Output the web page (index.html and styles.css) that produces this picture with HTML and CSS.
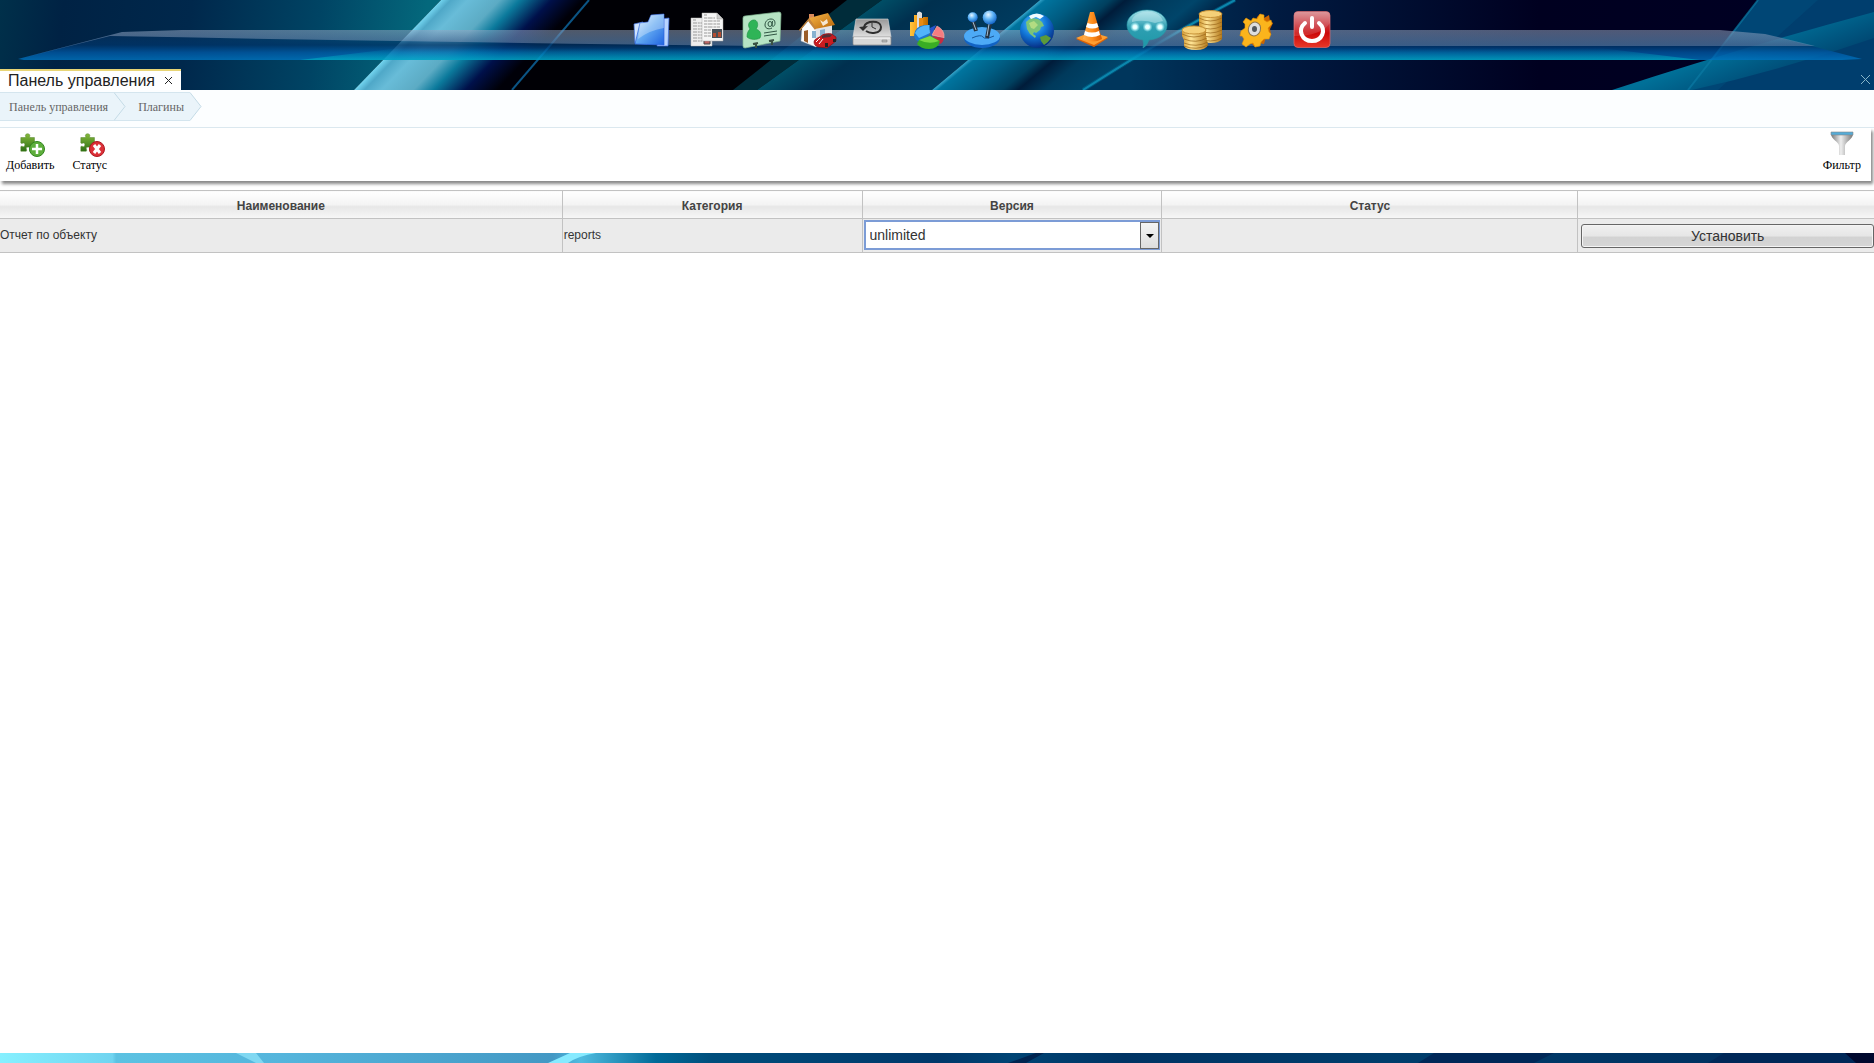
FILE: index.html
```html
<!DOCTYPE html>
<html lang="ru">
<head>
	<title>Панель управления</title>
	<meta charset="utf-8">
	<meta name="viewport" content="width=device-width, initial-scale=1">
	<link rel="stylesheet" href="styles.css">
</head>
<body>
	<header class="desktop">
		<svg class="wallpaper" viewBox="0 0 1874 90" preserveAspectRatio="none" aria-hidden="true">
			<defs>
				<linearGradient id="sky" gradientUnits="userSpaceOnUse" x1="0" y1="0" x2="420" y2="60"><stop offset="0" stop-color="#00304a"/><stop offset=".15" stop-color="#002244"/><stop offset=".45" stop-color="#00284c"/><stop offset=".75" stop-color="#004464"/><stop offset="1" stop-color="#04687c"/></linearGradient>
				<linearGradient id="beam" gradientUnits="userSpaceOnUse" x1="396" y1="45" x2="471" y2="117"><stop offset="0" stop-color="#78dcf6"/><stop offset=".08" stop-color="#4fa8c8"/><stop offset=".2" stop-color="#68bcd8"/><stop offset=".42" stop-color="#5cabc4"/><stop offset=".56" stop-color="#0b7a9c"/><stop offset=".78" stop-color="#00104a"/><stop offset="1" stop-color="#000008"/></linearGradient>
				<linearGradient id="teal" gradientUnits="userSpaceOnUse" x1="820" y1="45" x2="880" y2="128"><stop offset="0" stop-color="#004e66"/><stop offset=".3" stop-color="#00304f"/><stop offset="1" stop-color="#003c60"/></linearGradient>
				<linearGradient id="wave" gradientUnits="userSpaceOnUse" x1="986" y1="45" x2="1066" y2="141"><stop offset="0" stop-color="#38a6cc"/><stop offset=".03" stop-color="#00749e"/><stop offset=".2" stop-color="#005c82"/><stop offset=".36" stop-color="#00405f"/><stop offset=".44" stop-color="#001c3a"/><stop offset=".58" stop-color="#003a5c"/><stop offset=".8" stop-color="#00456a"/><stop offset="1" stop-color="#001e40"/></linearGradient>
				<linearGradient id="night" gradientUnits="userSpaceOnUse" x1="1130" y1="0" x2="1874" y2="0"><stop offset="0" stop-color="#00365c"/><stop offset=".2" stop-color="#001a40"/><stop offset=".55" stop-color="#000020"/><stop offset="1" stop-color="#000024"/></linearGradient>
				<linearGradient id="swoosh" gradientUnits="userSpaceOnUse" x1="1750" y1="40" x2="1770" y2="90"><stop offset="0" stop-color="#007098"/><stop offset=".5" stop-color="#005882"/><stop offset="1" stop-color="#00416c"/></linearGradient>
				<linearGradient id="shelf" x2="0" y2="1"><stop offset="0" stop-color="#0a3c70" stop-opacity=".2"/><stop offset=".5" stop-color="#003468" stop-opacity=".8"/><stop offset=".75" stop-color="#0058a4" stop-opacity=".8"/><stop offset="1" stop-color="#0074c0" stop-opacity=".8"/></linearGradient>
				<linearGradient id="gloss" x2="0" y2="1"><stop offset="0" stop-color="#bcc4d8" stop-opacity=".42"/><stop offset="1" stop-color="#8ca4c8" stop-opacity=".3"/></linearGradient>
				<linearGradient id="glow" x2="0" y2="1"><stop offset="0" stop-color="#00c0d8" stop-opacity="0"/><stop offset="1" stop-color="#00c8c8" stop-opacity=".5"/></linearGradient>
			</defs>
			<path fill="#000005" d="M0 0h1874v90H0z"/>
			<path fill="url(#sky)" d="M0 0h441l-87 90H0z"/>
			<path fill="url(#beam)" d="M441 0h149l-78 90H354z"/>
			<path d="M589 0l-77 90" stroke="#0b5484" stroke-width="2"/>
			<path fill="#002c3a" d="M847 0h35L757 90h-24z"/>
			<path fill="url(#teal)" d="M882 0h158L932 90H757z"/>
			<path fill="url(#wave)" d="M1040 0h195l-152 90H932z"/>
			<path fill="url(#night)" d="M1235 0h639v90H1083z"/>
			<path d="M1235 0Q1164 38 1083 90" fill="none" stroke="#00709a" stroke-width="4" opacity=".5"/>
			<path d="M1235 0Q1164 38 1083 90" fill="none" stroke="#0b86ac" stroke-width="2"/>
			<path fill="#003e6e" d="M1758 0h116v90h-186z"/>
			<path fill="#004e7c" d="M1758 0h60l-100 90h-30z" opacity=".5"/>
			<path fill="url(#swoosh)" d="M1874 12Q1740 48 1612 90h80q90-20 182-52z"/>
			<path d="M1758 0l-70 90" stroke="#0b7aa4" stroke-width="2" opacity=".7"/>
			<path fill="url(#shelf)" d="M18 59l104-27 60-2h1538l45 4 97 25-20 1H24z"/>
			<path fill="url(#glow)" d="M400 48h1200l100 12H300z"/>
			<path fill="url(#gloss)" d="M122 32l60-2h1538l45 4 50 12H760q-340-4-650-10L18 59z"/>
		</svg>

		<svg class="defs" aria-hidden="true">
			<defs>
				<linearGradient id="blue" x1="0" y1="0" x2="1" y2="1"><stop offset="0" stop-color="#dff0ff"/><stop offset=".5" stop-color="#61a8f2"/><stop offset="1" stop-color="#1f63e0"/></linearGradient>
				<radialGradient id="ball" cx=".4" cy=".3" r=".7"><stop offset="0" stop-color="#e6f6ff"/><stop offset=".5" stop-color="#5cb2f5"/><stop offset="1" stop-color="#1565c8"/></radialGradient>
				<linearGradient id="roof" x1="0" y1="0" x2="1" y2="1"><stop offset="0" stop-color="#f8b84c"/><stop offset="1" stop-color="#b86405"/></linearGradient>
				<linearGradient id="steel" x2="0" y2="1"><stop offset="0" stop-color="#989898"/><stop offset="1" stop-color="#e0e0e0"/></linearGradient>
				<linearGradient id="bar"><stop offset="0" stop-color="#ffc640"/><stop offset=".5" stop-color="#f59a10"/><stop offset="1" stop-color="#b96800"/></linearGradient>
				<radialGradient id="sea" cx=".4" cy=".3" r=".75"><stop offset="0" stop-color="#56c8ff"/><stop offset=".5" stop-color="#1277d8"/><stop offset="1" stop-color="#05277c"/></radialGradient>
				<linearGradient id="orange"><stop offset="0" stop-color="#ffb050"/><stop offset=".5" stop-color="#ff8d1c"/><stop offset="1" stop-color="#d85c00"/></linearGradient>
				<linearGradient id="bubble" x2="0" y2="1"><stop offset="0" stop-color="#a8e2ea"/><stop offset=".45" stop-color="#2f9fb2"/><stop offset="1" stop-color="#1d98a8"/></linearGradient>
				<radialGradient id="dot"><stop offset="0" stop-color="#fff"/><stop offset=".4" stop-color="#dcffff"/><stop offset="1" stop-color="#a0f0f8" stop-opacity="0"/></radialGradient>
				<linearGradient id="gold"><stop offset="0" stop-color="#d29a34"/><stop offset=".35" stop-color="#ffe596"/><stop offset="1" stop-color="#b57a1c"/></linearGradient>
				<linearGradient id="red" x2="0" y2="1"><stop offset="0" stop-color="#d8888c"/><stop offset=".4" stop-color="#c93038"/><stop offset=".6" stop-color="#cc0808"/><stop offset="1" stop-color="#e83828"/></linearGradient>
				<linearGradient id="leaf" x2="0" y2="1"><stop offset="0" stop-color="#86ba3c"/><stop offset="1" stop-color="#2d6f14"/></linearGradient>
				<linearGradient id="metal"><stop offset="0" stop-color="#777"/><stop offset=".45" stop-color="#eee"/><stop offset="1" stop-color="#777"/></linearGradient>
				<symbol id="puzzle" viewBox="0 0 22 22"><path fill="url(#leaf)" stroke="#47791f" stroke-width=".5" d="M2 5h5c1-1 0-1 0-2 0-3 5-3 5 0 0 1-1 1 0 2h5v5c1 1 2 0 3 0 2 0 2 5 0 5-1 0-2-1-3 0v5h-5c-1-1 0-2 0-3 0-2-4-2-4 0 0 1 1 2 0 3H2v-5c1-1 2 0 3 0 2 0 2-4 0-4-1 0-2 1-3 0z"/></symbol>
			</defs>
		</svg>

		<nav class="dock" aria-label="Меню">
			<button type="button" class="dock-item" aria-label="Файлы">
				<svg viewBox="0 0 40 40"><path fill="#b9d4ff" stroke="#3f6ee0" stroke-width=".7" d="M28 9l9-1-1 28H25z"/><path fill="#cfe4ff" stroke="#497be8" stroke-width=".7" d="M2 14l9-2 4 22-12-1z"/><path fill="url(#blue)" stroke="#2c62dc" stroke-width=".7" d="M8 13l8-1 3-7 13-1v31L3 34z"/><path fill="#fff" opacity=".3" d="M8 13l8-1 3-7 13-1v14Q18 20 6 29z"/></svg>
			</button>
			<button type="button" class="dock-item" aria-label="Документы">
				<svg viewBox="0 0 40 40"><path fill="#eee" stroke="#bbb" stroke-width=".5" d="M4 8h21v28H4z"/><path stroke="#999" stroke-dasharray="4 .8 2 .6" d="M6 10h3M6 13h13M6 16h13M6 19h13M6 22h9M6 25h9M6 28h9M6 31h9"/><path fill="#b66" stroke="#444" d="M17 30h6v4h-6z"/><path fill="#f6f6f6" stroke="#aaa" stroke-width=".5" d="M15 3h15l6 6v22H15z"/><path fill="#ccc" stroke="#999" stroke-width=".5" d="M30 3v6h6z"/><path stroke="#999" stroke-dasharray="3 .6 5 .8" d="M17 5h3M17 8h11M17 11h16M17 14h16M17 17h16M17 20h7M17 23h7M17 26h7"/><path fill="#485058" d="M25 19h10v9H25z"/><path fill="#b44d32" d="M26 23h3v4h-3zM31 22h3v5h-3z"/></svg>
			</button>
			<button type="button" class="dock-item" aria-label="Контакты">
				<svg viewBox="0 0 40 40"><path fill="#b6e3c4" stroke="#82b894" stroke-width=".7" d="M1 8q0-2 2-2l34-4q2 0 2 2l-1 27-35 7q-2 0-2-2z"/><path fill="#2fb457" stroke="#1c9142" stroke-width=".6" d="M11 10c5-1 6 6 3 9 6 2 5 7 4 9-3 2-10 2-13-1 0-4 1-6 3-8-3-4-1-8 3-9z"/><g fill="none" stroke="#315644" stroke-width="1"><ellipse cx="28" cy="14" rx="2" ry="2.500"/><path d="M30.500 11l-.5 5c2 1 3-1 3-3 0-3-2-4-4-4-4 0-6 3-6 6s3 5 7 3M22 23l13-2M22 26l13-2"/></g><path fill="none" stroke="#3a5143" stroke-width="2" d="M11 34l5-1M14 34v4M27 31l5-1M30 31v4"/></svg>
			</button>
			<button type="button" class="dock-item" aria-label="Объекты">
				<svg viewBox="0 0 40 40"><path fill="#d98a5c" d="M12 4h5v8h-5z"/><path fill="#fbfbfb" stroke="#bbb" stroke-width=".4" d="M5 18l7-8 7 9v18L4 31z"/><path fill="#e2e4e8" d="M19 18l16-5v17l-16 7z"/><path fill="url(#roof)" d="M12 8l19-5 7 12-20 4z"/><path fill="#c4843c" d="M2 20L12 8l7 10-1 2-7-9-8 10z"/><path fill="#9a5d29" d="M7 21l4-1v13l-4-2z"/><path fill="#88b2d0" d="M15 21h4v7h-4zM23 20l5-1v6l-5 1z"/><path fill="#fff" opacity=".8" d="M23 10l3 2 4-3 1 4-5 3z"/><path fill="#c81c20" stroke="#7c0810" stroke-width=".6" d="M17 32c0-3 4-4 7-6 3-3 11-3 12-1l3 2v4l-5 4-4 3-9-1c-3-1-4-3-4-5z"/><path fill="#503038" d="M25 26c3-2 8-2 10-1l-2 2-8 1z"/><path stroke="#fff" d="M23 28l-4 4M26 29l-4 5"/><path fill="#222" d="M28 33h3v4h-3zM36 29h3v3h-3z"/></svg>
			</button>
			<button type="button" class="dock-item" aria-label="История">
				<svg viewBox="0 0 40 40"><path fill="url(#steel)" stroke="#ddd" stroke-width=".6" d="M4 9h32l3 18H1z"/><path fill="#d7d7d7" stroke="#888" stroke-width=".7" d="M1 27h38v7q0 1-1 1H2q-1 0-1-1z"/><path stroke="#fff" d="M2 28h36"/><path fill="none" stroke="#2f2f2f" stroke-width="2" d="M12 17c2-7 17-7 17 0 0 7-11 7-15 4"/><path fill="#2f2f2f" d="M7 17l9-1-5 5z"/><path fill="none" stroke="#333" d="M20 13v4l4 2"/><path fill="#bbb" stroke="#777" stroke-width=".5" d="M30 30h5v2h-5z"/></svg>
			</button>
			<button type="button" class="dock-item" aria-label="Отчеты">
				<svg viewBox="0 0 40 40"><path fill="url(#bar)" d="M3 12h5v14H3zM7 5h5v20H7zM16 7h5v18h-5z"/><path fill="#ddd" d="M10 3q2-3 5 0v20h-5z"/><path fill="#e88b12" d="M12 8h4v16h-4z"/><path fill="#1d78d0" d="M7 25q1-9 11-10h5l-1 10-9 7q-6-2-6-7z"/><path fill="#52b4fa" d="M8 23q4-8 14-8l1 8-11 5z"/><path fill="#2554cc" d="M23 18l6-3-5 12z"/><path fill="#f67c80" stroke="#fba" stroke-width=".6" d="M25 25l5-9q8 4 7 12z"/><path fill="#c72c40" d="M25 26l12 2q-1 5-4 6z"/><path fill="#3aad24" d="M12 30l11-4 10 5q-2 8-11 8-8 0-12-5z"/><path fill="#7bda44" d="M12 30l11-4 9 5q-10 4-20-1z"/></svg>
			</button>
			<button type="button" class="dock-item" aria-label="Управление">
				<svg viewBox="0 0 40 40"><ellipse cx="20" cy="28" rx="18" ry="10" fill="#1263c4"/><ellipse cx="20" cy="26" rx="18" ry="9" fill="#4daaf6"/><path fill="none" stroke="#1a5899" d="M10 28q9-4 11-1t11-1"/><path stroke="#243443" stroke-width="4" d="M11 11l3 10M28 13l-3 15"/><path stroke="#a7c0d4" d="M11 12l3 8M27 14l-2 12"/><circle cx="10.7" cy="7.3" r="5" fill="url(#ball)"/><circle cx="27.7" cy="7.5" r="7" fill="url(#ball)"/></svg>
			</button>
			<button type="button" class="dock-item" aria-label="Карта">
				<svg viewBox="0 0 40 40"><circle cx="20" cy="20.7" r="17" fill="url(#sea)"/><path fill="#7cc478" d="M9 12l5-4 7 1 4 3 2 4-3 1-1 3-4 3-2-1-1 2 3 2-1 2-5-4-3-5z"/><path fill="#d8ec88" d="M12 13l5-2 4 4-4 4-3-1z" opacity=".6"/><path fill="#f0fbff" d="M12 6q8-5 15 0l-4 3-4-2-5 2z"/><path fill="#5c9a3a" d="M23 27l6-2 5 3q-3 5-7 7l-3-4z"/></svg>
			</button>
			<button type="button" class="dock-item" aria-label="Монтаж">
				<svg viewBox="0 0 40 40"><path fill="#dc6206" d="M4 29l15-5 17 4-14 9z"/><path fill="#ff9e30" d="M4 28l15-6 17 5-14 8z"/><path fill="url(#orange)" d="M18 2h4l8 27q-9 5-19 0z"/><path fill="#fff" d="M15.500 13q5 2 9.500 0l1.500 4q-6 3-12.500 0zM13 21q7 3 14 0l1 4q-8 4-16 0z"/></svg>
			</button>
			<button type="button" class="dock-item" aria-label="Сообщения">
				<svg viewBox="0 0 40 40"><path fill="url(#bubble)" stroke="#2895a5" stroke-width=".6" d="M20 0c12 0 20 7 20 15 0 9-8 14-18 15q-2 6-6 8 1-4 0-8C6 29 0 22 0 15 0 7 8 0 20 0z"/><path fill="#c7eef2" opacity=".45" d="M5 10C8 0 32-2 36 11l-8 2q-12-4-23-1z"/><g fill="url(#dot)"><circle cx="8" cy="17" r="5"/><circle cx="20.500" cy="17" r="5"/><circle cx="33" cy="17" r="5"/></g></svg>
			</button>
			<button type="button" class="dock-item" aria-label="Платежи">
				<svg viewBox="0 0 40 40"><path fill="url(#gold)" d="M17 4h23v25q-3 4-11 4t-12-4z"/><path fill="none" stroke="#99651a" stroke-width=".7" d="M17 8q11 6 23 0M17 12q11 6 23 0M17 16q11 6 23 0M17 20q11 6 23 0M17 24q11 6 23 0M17 28q11 6 23 0"/><ellipse cx="28.500" cy="4" rx="11.500" ry="3.500" fill="#f5d078" stroke="#c89338"/><path fill="url(#gold)" d="M0 20h24v7l2 8q-2 5-12 5T2 36v-6l-2-4z"/><path fill="none" stroke="#99651a" stroke-width=".7" d="M0 24q12 6 24 0M2 29q12 5 23-1M2 33q12 5 24-1M2 36q12 5 24-1"/><ellipse cx="12" cy="20" rx="12" ry="4" fill="#f5d078" stroke="#c89338"/></svg>
			</button>
			<button type="button" class="dock-item" aria-label="Настройки">
				<svg viewBox="0 0 40 40"><path fill="#cb6500" d="M20 7l3-3 4 4 5-3 1 6 3 2-3 6 1 5-5 3-2 7-5-1-4 4-4-4z"/><path fill="#fbb41c" stroke="#e59005" stroke-width=".6" d="M16 8l4 1 3-5 4 1v5l3 2 4-2 1 4-4 4 1 4 2 2-2 5h-5l-3 3-1 4-5 1-2-4-3 1-4 3-4-3 2-5-2-3H3l1-5 4-3v-4L6 12l3-4 5 3z"/><ellipse cx="17.500" cy="19" rx="6" ry="7" fill="#dedede" stroke="#8b7450" transform="rotate(20 17.500 19)"/><ellipse cx="17.500" cy="19" rx="2.500" ry="3" fill="#50565c"/></svg>
			</button>
			<button type="button" class="dock-item" aria-label="Выход">
				<svg viewBox="0 0 40 40"><rect x="2" y="1.500" width="36" height="36" rx="4" fill="url(#red)" stroke="#d86c70" stroke-width=".7"/><path fill="#fff" opacity=".14" d="M2 5q0-3 3-3h30q3 0 3 3v8Q29 26 2 26z"/><path fill="none" stroke="#fff" stroke-width="4" stroke-linecap="round" d="M20 8v9M13 13c-8 7-3 18 7 18s15-11 7-18"/></svg>
			</button>
		</nav>

		<div class="tabs">
			<div class="tab">
				<span>Панель управления</span>
				<button type="button" class="close" aria-label="Закрыть вкладку"><svg viewBox="0 0 9 9"><path d="M1 1l7 7M8 1L1 8"/></svg></button>
			</div>
			<button type="button" class="close close-all" aria-label="Закрыть все"><svg viewBox="0 0 9 9"><path d="M0 0l9 9M9 0L0 9"/></svg></button>
		</div>
	</header>

	<main>
		<nav class="breadcrumbs" aria-label="Навигация">
			<a href="#" class="crumb">Панель управления<svg viewBox="0 0 12 28"><path d="M0 0l11 14L0 28"/></svg></a>
			<a href="#" class="crumb">Плагины<svg viewBox="0 0 12 28"><path d="M0 0l11 14L0 28"/></svg></a>
		</nav>

		<div class="toolbar">
			<button type="button" class="tool">
				<svg viewBox="0 0 26 26"><use href="#puzzle" width="20" height="24"/><circle cx="18" cy="18" r="7.500" fill="#5eae3c" stroke="#32851f"/><path d="M18 13v10M13 18h10" stroke="#fff" stroke-width="2.500"/></svg>
				Добавить
			</button>
			<button type="button" class="tool">
				<svg viewBox="0 0 26 26"><use href="#puzzle" width="20" height="24"/><circle cx="18" cy="18" r="7.500" fill="#dc3038" stroke="#ae1820"/><path d="M15 14l6 8M21 14l-6 8" stroke="#fff" stroke-width="3"/></svg>
				Статус
			</button>
			<button type="button" class="tool tool-filter">
				<svg viewBox="0 0 26 26"><path fill="url(#metal)" d="M2 3h22c0 5-8 8-8 12v9h-6v-9c0-4-8-7-8-12z"/><path fill="#54acd8" stroke="#888" stroke-width=".6" d="M2 1h22v3H2z"/></svg>
				Фильтр
			</button>
		</div>

		<table class="plugins">
			<thead>
				<tr>
					<th class="col-name">Наименование</th>
					<th class="col-category">Категория</th>
					<th class="col-version">Версия</th>
					<th class="col-status">Статус</th>
					<th class="col-action"></th>
				</tr>
			</thead>
			<tbody>
				<tr>
					<td>Отчет по объекту</td>
					<td>reports</td>
					<td>
						<div class="version">
							<select aria-label="Версия">
								<option>unlimited</option>
							</select>
						</div>
					</td>
					<td></td>
					<td><button type="button" class="install">Установить</button></td>
				</tr>
			</tbody>
		</table>
	</main>

	<footer class="bottom">
		<svg viewBox="0 0 1874 10" preserveAspectRatio="none" aria-hidden="true">
			<defs>
				<linearGradient id="floor" gradientUnits="userSpaceOnUse" x1="0" y1="0" x2="1874" y2="0"><stop offset="0" stop-color="#86f0ff"/><stop offset=".06" stop-color="#70d4f0"/><stop offset=".062" stop-color="#5cc2e2"/><stop offset=".15" stop-color="#55b5dc"/><stop offset=".295" stop-color="#4398c4"/><stop offset=".31" stop-color="#50bce0"/><stop offset=".35" stop-color="#006a98"/><stop offset=".38" stop-color="#004e7c"/><stop offset=".5" stop-color="#00386a"/><stop offset=".54" stop-color="#004474"/><stop offset=".6" stop-color="#003464"/><stop offset=".74" stop-color="#003e6c"/><stop offset="1" stop-color="#002c5c"/></linearGradient>
			</defs>
			<path fill="url(#floor)" d="M0 0h1874v10H0z"/>
			<path fill="#80d8f2" d="M236 0h20l8 10h-8z"/>
			<path fill="#86eaff" d="M570 0h26q-18 3-28 10h-20z"/>
			<path fill="#002450" d="M1036 0h8l-18 10h-18z"/>
			<path fill="#002858" d="M1434 0h120l-20 10h-116zM1724 0h150v10h-166z"/>
			<path fill="#00082e" d="M1845 0h29v10h-18z"/>
		</svg>
	</footer>
</body>
</html>
```
FILE: styles.css
```css
* {
	box-sizing: border-box;
}

body {
	margin: 0;
	min-height: 100vh;
	display: flex;
	flex-direction: column;
	background: #fff;
	color: #333;
	font-family: "Liberation Sans", Arial, sans-serif;
	font-size: 12px;
}

button {
	margin: 0;
	padding: 0;
	border: none;
	background: none;
	cursor: pointer;
}

svg {
	display: block;
}

main {
	flex: 1;
}

.desktop {
	position: relative;
	height: 90px;
	display: flex;
	flex-direction: column;
	justify-content: space-between;
}

.wallpaper {
	position: absolute;
	top: 0;
	left: 0;
	width: 100%;
	height: 100%;
}

.defs {
	position: absolute;
	width: 0;
	height: 0;
}

.dock {
	position: relative;
	display: flex;
	justify-content: center;
	gap: 15px;
	padding: 10px 0 0 90px;
}

.dock-item svg {
	width: 40px;
	height: 40px;
	overflow: visible;
}

.tabs {
	position: relative;
	display: flex;
	align-items: flex-end;
	justify-content: space-between;
}

.tab {
	display: flex;
	align-items: center;
	gap: 9px;
	height: 21px;
	padding: 0 8px;
	border-top: 2px solid #e8d576;
	background: #fff;
	color: #222;
	font-size: 16px;
	line-height: 21px;
}

.close svg {
	width: 9px;
	height: 9px;
	fill: none;
	stroke: #222;
	stroke-width: 1;
}

.close-all {
	padding: 0 4px 6px 0;
}

.close-all svg {
	stroke: #86b4c8;
}

.breadcrumbs {
	display: flex;
	height: 38px;
	padding-top: 2px;
	background: #fcfeff;
	border-bottom: 1px solid #dce9f0;
}

.crumb {
	position: relative;
	height: 29px;
	padding: 0 6px 0 9px;
	border-top: 1px solid #d4e5ee;
	border-bottom: 1px solid #d4e5ee;
	background: #eaf4fa;
	color: #666;
	font-family: "Liberation Serif", "Times New Roman", serif;
	font-size: 12px;
	line-height: 29px;
	text-decoration: none;
}

.crumb + .crumb {
	padding-left: 24px;
}

.crumb svg {
	position: absolute;
	z-index: 1;
	top: -1px;
	left: 100%;
	width: 12px;
	height: 29px;
	fill: #eaf4fa;
	stroke: #c4dbe6;
}

.toolbar {
	display: flex;
	gap: 18px;
	height: 53px;
	margin-right: 3px;
	padding: 3px 10px 0 6px;
	background: #fff;
	box-shadow: 2px 3px 3px #888;
}

.tool {
	display: flex;
	flex-direction: column;
	align-items: center;
	color: #000;
	font-family: "Liberation Serif", "Times New Roman", serif;
	font-size: 12px;
	line-height: 16px;
}

.tool svg {
	width: 26px;
	height: 26px;
	margin-left: 4px;
}

.tool-filter {
	margin-left: auto;
}

.tool-filter svg {
	margin-left: 0;
}

.plugins {
	width: 100%;
	margin-top: 9px;
	border-collapse: collapse;
	table-layout: fixed;
}

.plugins th {
	height: 28px;
	padding: 2px 0 0;
	border: 1px solid #c2c2c2;
	background: linear-gradient(#fff, #f3f3f3 50%, #e6e6e6 55%, #f7f7f7);
	color: #444;
	font-size: 12px;
}

.plugins td {
	height: 33px;
	padding: 1px 1px 2px;
	border: 1px solid #c2c2c2;
	background: #ebebeb;
}

.plugins th:first-child,
.plugins td:first-child {
	padding-left: 0;
	border-left: none;
}

.plugins td:last-child {
	padding: 1px 0 0 3px;
}

.plugins th:last-child,
.plugins td:last-child {
	border-right: none;
}

.col-name {
	width: 30%;
}

.col-category,
.col-version {
	width: 16%;
}

.col-status {
	width: 22.2%;
}

.version {
	position: relative;
}

.version select {
	display: block;
	width: 100%;
	height: 30px;
	padding: 0 20px 0 4px;
	border: 2px solid #7c9cd6;
	border-radius: 0;
	background: #fff;
	color: #333;
	appearance: none;
	font-family: inherit;
	font-size: 14px;
}

/* drop-down button */
.version::before {
	content: "";
	position: absolute;
	top: 2px;
	right: 1px;
	bottom: 1px;
	width: 17px;
	border: 1px solid #666;
	background: linear-gradient(#f4f4f4, #ddd);
	pointer-events: none;
}

.version::after {
	content: "";
	position: absolute;
	top: 14px;
	right: 6px;
	border: 4px solid transparent;
	border-top-color: #000;
	border-bottom: none;
	pointer-events: none;
}

.install {
	display: block;
	width: 100%;
	height: 24px;
	border: 1px solid #666;
	border-radius: 3px;
	background: linear-gradient(#f0f0f0, #e6e6e6 50%, #d2d2d2 55%, #d6d6d6);
	box-shadow: inset 0 0 0 1px #f4f4f4;
	color: #333;
	font-family: inherit;
	font-size: 14px;
}

.bottom svg {
	width: 100%;
	height: 10px;
}
```
